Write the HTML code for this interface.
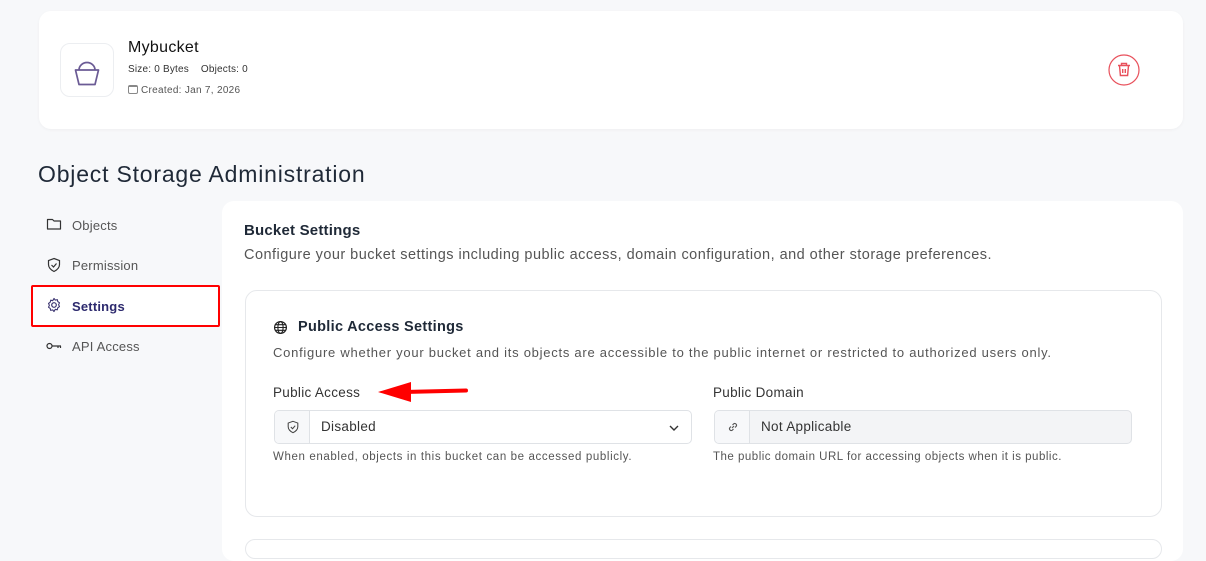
<!DOCTYPE html>
<html><head><style>
*{box-sizing:border-box;margin:0;padding:0}
body{width:1206px;height:544px;overflow:hidden;background:#f7f8fa;font-family:"Liberation Sans",sans-serif;color:#1f2937;position:relative}
.abs{position:absolute}
.card{background:#fff;border-radius:12px}
</style></head><body>
<div class="abs card" style="left:39px;top:11px;width:1144px;height:118px;box-shadow:0 1px 3px rgba(0,0,0,.04)"></div>
<div class="abs" style="left:60px;top:43px;width:54px;height:54px;border:1px solid #eceef1;border-radius:10px;background:#fff">
<svg width="54" height="54" viewBox="0 0 54 54" style="position:absolute;left:-1px;top:-1px"><path d="M15.5 27h23l-3.5 14.5h-16z M19 27a8 7.5 0 0 1 16 0" fill="none" stroke="#6b5b95" stroke-width="1.7" stroke-linejoin="round"/></svg></div>
<div class="abs" style="left:128px;top:39px;font-size:16px;color:#111;letter-spacing:.3px">Mybucket</div>
<div class="abs" style="left:128px;top:64px;font-size:10px;color:#333;letter-spacing:.2px">Size: 0 Bytes&nbsp;&nbsp;&nbsp;&nbsp;Objects: 0</div>
<div class="abs" style="left:128px;top:85px;font-size:10px;color:#555;letter-spacing:.3px"><span style="display:inline-block;width:10px;height:9px;border:1px solid #888;border-top-width:2px;border-radius:2px;vertical-align:-1px;margin-right:3px"></span>Created: Jan 7, 2026</div>
<svg class="abs" style="left:1108px;top:54px" width="32" height="32" viewBox="0 0 32 32"><circle cx="16" cy="16" r="15" fill="none" stroke="#e8505b" stroke-width="1.2"/><path d="M10 11.5h12M13.5 11.5v-2h5v2M11.5 11.5l.9 10h7.2l.9-10M14.7 15v4M17.3 15v4" fill="none" stroke="#e8505b" stroke-width="1.4"/></svg>
<div class="abs" style="left:38px;top:161px;font-size:23px;color:#1f2937;letter-spacing:.8px">Object Storage Administration</div>

<svg class="abs" style="left:46px;top:216px" width="16" height="16" viewBox="0 0 16 16"><path d="M1.5 3.5h5l1.5 1.5h6.5v8h-13z" fill="none" stroke="#333" stroke-width="1.2" stroke-linejoin="round"/></svg>
<div class="abs" style="left:72px;top:218px;font-size:13px;color:#555;letter-spacing:.2px">Objects</div>
<svg class="abs" style="left:46px;top:257px" width="16" height="16" viewBox="0 0 16 16"><path d="M8 1.5l5.5 2v4c0 3.5-2.5 5.5-5.5 7-3-1.5-5.5-3.5-5.5-7v-4z M5.5 8l2 2 3-3.5" fill="none" stroke="#333" stroke-width="1.2"/></svg>
<div class="abs" style="left:72px;top:258px;font-size:13px;color:#555;letter-spacing:.2px">Permission</div>
<div class="abs" style="left:31px;top:285px;width:189px;height:42px;border:2px solid #f00;border-radius:2px;background:#fff"></div>
<svg class="abs" style="left:46px;top:297px" width="16" height="16" viewBox="0 0 16 16"><circle cx="8" cy="8" r="2.3" fill="none" stroke="#3b3470" stroke-width="1.2"/><path d="M8 1.5l1.3 1.6 2-.5.5 2 1.7 1.2-.9 1.9.9 1.9-1.7 1.2-.5 2-2-.5L8 14.5l-1.3-1.6-2 .5-.5-2-1.7-1.2.9-1.9-.9-1.9 1.7-1.2.5-2 2 .5z" fill="none" stroke="#3b3470" stroke-width="1.1" stroke-linejoin="round"/></svg>
<div class="abs" style="left:72px;top:299px;font-size:13px;color:#2d2a6e;font-weight:bold;letter-spacing:.2px">Settings</div>
<svg class="abs" style="left:45px;top:338px" width="18" height="16" viewBox="0 0 18 16"><circle cx="4.5" cy="8" r="2.5" fill="none" stroke="#333" stroke-width="1.2"/><path d="M7 8h9M13 8v2M15.5 8v2" fill="none" stroke="#333" stroke-width="1.2"/></svg>
<div class="abs" style="left:72px;top:339px;font-size:13px;color:#555;letter-spacing:.2px">API Access</div>

<div class="abs card" style="left:222px;top:201px;width:961px;height:360px"></div>
<div class="abs" style="left:244px;top:222px;font-size:15px;font-weight:bold;color:#1f2937;letter-spacing:.2px">Bucket Settings</div>
<div class="abs" style="left:244px;top:247px;font-size:14.5px;color:#555;letter-spacing:.47px">Configure your bucket settings including public access, domain configuration, and other storage preferences.</div>
<div class="abs" style="left:245px;top:290px;width:917px;height:227px;border:1px solid #e6e8eb;border-radius:12px;background:#fff"></div>
<div class="abs" style="left:245px;top:539px;width:917px;height:20px;border:1px solid #e6e8eb;border-radius:12px;background:#fff"></div>
<svg class="abs" style="left:273px;top:320px" width="15" height="15" viewBox="0 0 16 16"><circle cx="8" cy="8" r="6.3" fill="none" stroke="#222" stroke-width="1.3"/><ellipse cx="8" cy="8" rx="2.8" ry="6.3" fill="none" stroke="#222" stroke-width="1.2"/><path d="M1.7 8h12.6M2.5 5h11M2.5 11h11" stroke="#222" stroke-width="1.1"/></svg>
<div class="abs" style="left:298px;top:319px;font-size:14.5px;font-weight:bold;color:#1f2937;letter-spacing:.3px">Public Access Settings</div>
<div class="abs" style="left:273px;top:345px;font-size:13px;color:#555;letter-spacing:.74px">Configure whether your bucket and its objects are accessible to the public internet or restricted to authorized users only.</div>
<div class="abs" style="left:273px;top:385px;font-size:13.5px;color:#333;letter-spacing:.3px">Public Access</div>
<svg class="abs" style="left:376px;top:380px" width="95" height="22" viewBox="0 0 95 22"><path d="M90 10.5L28 12" stroke="#f00" stroke-width="4" stroke-linecap="round"/><path d="M2 12L35 2v20z" fill="#f00"/></svg>
<div class="abs" style="left:713px;top:385px;font-size:13.5px;color:#333;letter-spacing:.3px">Public Domain</div>
<div class="abs" style="left:274px;top:410px;width:418px;height:34px;border:1px solid #dfe2e6;border-radius:5px;background:#fff;overflow:hidden">
<div style="position:absolute;left:0;top:0;width:35px;height:100%;background:#f7f8fa;border-right:1px solid #dfe2e6"></div>
<svg style="position:absolute;left:11px;top:9px" width="14" height="14" viewBox="0 0 16 16"><path d="M8 1.5l5.5 2v4c0 3.5-2.5 5.5-5.5 7-3-1.5-5.5-3.5-5.5-7v-4z M5.5 8l2 2 3-3.5" fill="none" stroke="#444" stroke-width="1.2"/></svg>
<div style="position:absolute;left:46px;top:8px;font-size:13.5px;color:#333;letter-spacing:.3px">Disabled</div>
<svg style="position:absolute;right:11px;top:11px" width="12" height="12" viewBox="0 0 12 12"><path d="M2 4l4 4 4-4" fill="none" stroke="#333" stroke-width="1.4"/></svg></div>
<div class="abs" style="left:714px;top:410px;width:418px;height:34px;border:1px solid #dfe2e6;border-radius:5px;background:#f3f4f6;overflow:hidden">
<div style="position:absolute;left:0;top:0;width:35px;height:100%;background:#f7f8fa;border-right:1px solid #dfe2e6"></div>
<svg style="position:absolute;left:12px;top:10px" width="12" height="12" viewBox="0 0 12 12"><path d="M5 7l2-2M4 5.5L2.8 6.7a1.8 1.8 0 0 0 2.5 2.5L6.5 8M8 6.5l1.2-1.2a1.8 1.8 0 0 0-2.5-2.5L5.5 4" fill="none" stroke="#555" stroke-width="1.1"/></svg>
<div style="position:absolute;left:46px;top:8px;font-size:13.5px;color:#333;letter-spacing:.3px">Not Applicable</div></div>
<div class="abs" style="left:273px;top:451px;font-size:11.5px;color:#555;letter-spacing:.62px">When enabled, objects in this bucket can be accessed publicly.</div>
<div class="abs" style="left:713px;top:451px;font-size:11.5px;color:#555;letter-spacing:.5px">The public domain URL for accessing objects when it is public.</div>
</body></html>
